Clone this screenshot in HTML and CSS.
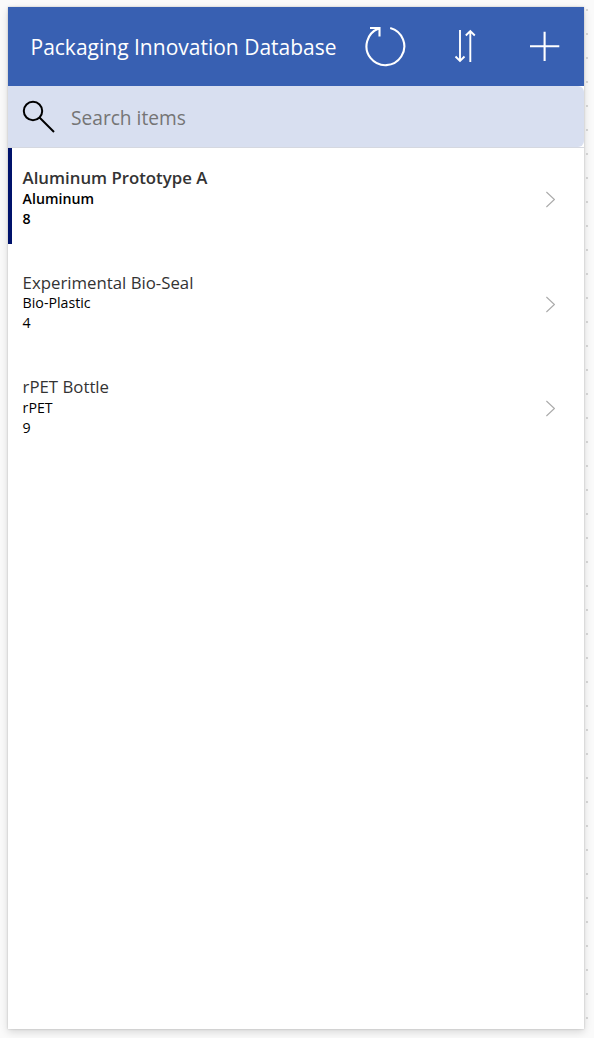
FILE: index.html
```html
<!DOCTYPE html>
<html lang="en">
<head>
    <meta charset="UTF-8">
    <meta name="viewport" content="width=device-width, initial-scale=1.0">
    <title>Packaging Innovation Database</title>
    <link rel="stylesheet" href="styles.css">
</head>
<body>
    <div class="screen">
        <header class="header">
            <h1 class="title">Packaging Innovation Database</h1>
            <button class="icon-btn refresh" aria-label="Refresh">
                <svg width="42" height="42" viewBox="0 0 42 42"><path d="M26.2 3A18.9 18.9 0 1 1 14.7 3.6M6 3H15.5V11.5" stroke-width="2.1"/></svg>
            </button>
            <button class="icon-btn sort" aria-label="Sort">
                <svg width="22" height="34" viewBox="0 0 22 34"><path d="M6 1V32M1.5 27.5L6 32L10.5 27.5M16.3 33V2M11.8 6.5L16.3 2L20.8 6.5" stroke-width="1.9"/></svg>
            </button>
            <button class="icon-btn add" aria-label="New item">
                <svg width="30" height="30" viewBox="0 0 30 30"><path d="M0 15.3H29.3M14.6 0.8V30" stroke-width="2.1"/></svg>
            </button>
        </header>
        <div class="search">
            <svg class="search-icon" width="34" height="34" viewBox="0 0 34 34"><circle cx="11" cy="11" r="9.2"/><path d="M17.5 17.5L32 32"/></svg>
            <input class="search-input" type="text" placeholder="Search items" aria-label="Search items">
        </div>
        <ul class="gallery">
            <li class="item selected">
                <div class="text">
                    <div class="name">Aluminum Prototype A</div>
                    <div class="sub">Aluminum</div>
                    <div class="sub">8</div>
                </div>
                <svg class="chevron" width="10" height="17" viewBox="0 0 10 17"><path d="M1.4 1L9.4 8.5L1.4 16"/></svg>
            </li>
            <li class="item">
                <div class="text">
                    <div class="name">Experimental Bio-Seal</div>
                    <div class="sub">Bio-Plastic</div>
                    <div class="sub">4</div>
                </div>
                <svg class="chevron" width="10" height="17" viewBox="0 0 10 17"><path d="M1.4 1L9.4 8.5L1.4 16"/></svg>
            </li>
            <li class="item">
                <div class="text">
                    <div class="name">rPET Bottle</div>
                    <div class="sub">rPET</div>
                    <div class="sub">9</div>
                </div>
                <svg class="chevron" width="10" height="17" viewBox="0 0 10 17"><path d="M1.4 1L9.4 8.5L1.4 16"/></svg>
            </li>
        </ul>
    </div>
</body>
</html>
```

FILE: styles.css
```css
* { box-sizing: border-box; }
body {
    margin: 0;
    height: 1038px;
    padding: 7px 10px 9px 8px;
    overflow: hidden;
    font-family: "Open Sans", "Liberation Sans", sans-serif;
    /* dotted canvas grid, only the right edge shows */
    background: conic-gradient(from 90deg at 22px 22px, #d8d8d8 25%, transparent 0) 564px 11px / 24px 24px, #fafafa;
}
.screen { height: 1022px; background: #fff; box-shadow: 0 0 2px rgba(0,0,0,.2), 0 3px 8px rgba(0,0,0,.14); }

.header { display: flex; align-items: center; height: 79px; padding-left: 22.5px; background: #3860b2; color: #fff; }
.title { flex: none; margin: 0; width: 310.5px; font-size: 21px; font-weight: 400; line-height: 30px; white-space: nowrap; }
.icon-btn { display: flex; align-items: center; justify-content: center; flex: none; height: 79px; padding: 0 0 1px; border: 0; background: none; cursor: pointer; }
.icon-btn svg { fill: none; stroke: #fff; }
.refresh { width: 88px; }
.sort { width: 72px; }
.add { width: 30px; margin-left: 29px; }

.search { display: flex; align-items: center; height: 61px; padding-left: 14px; background: #d8dff0; border-radius: 0 6px 6px 0; }
.search-icon { flex: none; fill: none; stroke: #000; stroke-width: 2; }
.search-input { flex: 1; min-width: 0; height: 40px; margin: 3px 10px 0 15px; padding: 0; border: 0; outline: none; background: none; font-family: inherit; font-size: 19.15px; color: #333; }
.search-input::placeholder { color: #757575; opacity: 1; }

.gallery { margin: 0; padding: 0; list-style: none; border-top: 1px solid #d5d8e0; }
.item { display: flex; align-items: center; height: 96px; margin-bottom: 8.5px; padding: 0 29px 0 10.6px; border-left: 4px solid transparent; }
.selected { border-left-color: #00126b; font-weight: 600; }
.text { flex: 1; padding-top: 4.4px; }
.name { font-size: 16.8px; line-height: 21.6px; color: #333; }
.sub { font-size: 14.2px; line-height: 20px; color: #000; }
.chevron { flex: none; margin-top: 7px; fill: none; stroke: #aaa; stroke-width: 1.1; }
```
